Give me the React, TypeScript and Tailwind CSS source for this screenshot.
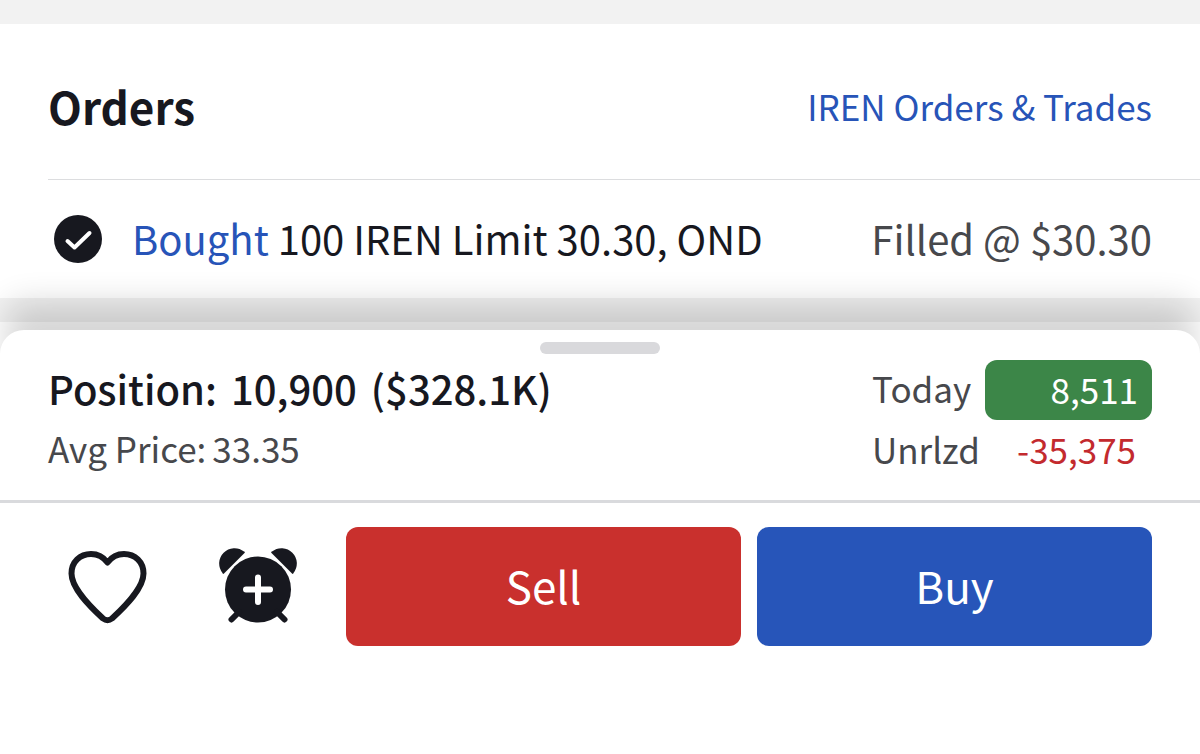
function CheckIcon() {
  return (
    <svg viewBox="0 0 48 48" className="size-12 shrink-0" aria-hidden="true">
      <circle cx="24" cy="24" r="24" fill="#17181f" />
      <path
        d="M13.500 26 L20.500 32.500 L35.500 18"
        fill="none"
        stroke="#fff"
        strokeWidth="4"
        strokeLinecap="round"
        strokeLinejoin="round"
      />
    </svg>
  )
}

function HeartIcon() {
  return (
    <svg viewBox="0 0 80 80" className="size-20" aria-hidden="true">
      <path
        d="M40.500 15.500 C36 9.500 30 7 24 7 C13 7 4.500 15 4.500 26.500 C4.500 41 22 58.500 36 71.500 Q40.500 75 45 71.500 C59 58.500 76.500 41 76.500 26.500 C76.500 15 68 7 57 7 C51 7 45 9.500 40.500 15.500 Z"
        fill="none"
        stroke="#17181f"
        strokeWidth="6"
        strokeLinejoin="round"
      />
    </svg>
  )
}

function AlarmIcon() {
  return (
    <svg viewBox="0 0 80 80" className="size-20" aria-hidden="true">
      <g fill="#17181f">
        <circle cx="40" cy="42.500" r="33" />
        <path d="M4.500 26 A15.300 15.300 0 0 1 26 4.500 Q27.500 5 26.500 6 L6 26.500 Q5 27.500 4.500 26 Z" />
        <path d="M75.500 26 A15.300 15.300 0 0 0 54 4.500 Q52.500 5 53.500 6 L74 26.500 Q75 27.500 75.500 26 Z" />
      </g>
      <path
        d="M21 65 L13.500 72.500 M59 65 L66.500 72.500"
        stroke="#17181f"
        strokeWidth="6"
        strokeLinecap="round"
      />
      <path
        d="M40 30.500 V55 M28 42.500 H52"
        stroke="#fff"
        strokeWidth="6"
        strokeLinecap="round"
      />
    </svg>
  )
}

function Orders() {
  return (
    <section className="bg-white pl-12">
      <header className="flex h-[156px] items-center justify-between border-b border-[#dcdddf] pt-2 pr-12">
        <h2 className="text-[44px] leading-none font-semibold">Orders</h2>
        <a href="#orders" className="text-[35px] leading-none text-[#2754b8]">
          IREN Orders &amp; Trades
        </a>
      </header>

      <div className="flex h-[118px] items-center justify-between pr-12 text-[40px] leading-none">
        <div className="flex items-center gap-[30px] pl-[6px]">
          <CheckIcon />
          <p className="pb-[2px]">
            <span className="text-[#2754b8]">Bought</span> 100 IREN Limit 30.30, OND
          </p>
        </div>
        <p className="pb-[2px] text-[#47484c]">Filled @ $30.30</p>
      </div>
    </section>
  )
}

function PositionSheet() {
  return (
    <section className="relative rounded-t-[24px] bg-white shadow-[0_-34px_32px_-6px_rgba(0,0,0,0.16)]">
      <div className="flex h-7 justify-center pt-3">
        <div className="h-3 w-[120px] rounded-full bg-[#d9d9dc]" />
      </div>

      <div className="flex justify-between border-b-3 border-[#d9dadd] px-12 pb-[22px] leading-[60px]">
        <div>
          <h3 className="flex gap-[14px] text-[40px] font-medium">
            <span>Position:</span>
            <span>10,900</span>
            <span>($328.1K)</span>
          </h3>
          <p className="flex gap-[6px] text-[35px] text-[#47484c]">
            <span>Avg Price:</span>
            <span>33.35</span>
          </p>
        </div>

        <dl className="w-[280px] text-[35px]">
          <div className="flex justify-between">
            <dt className="text-[#47484c]">Today</dt>
            <dd className="mt-[2px] h-[60px] w-[167px] rounded-[12px] bg-[#3c8648] pr-[14px] text-right leading-[58px] text-white">
              8,511
            </dd>
          </div>
          <div className="flex justify-between leading-[58px]">
            <dt className="text-[#47484c]">Unrlzd</dt>
            <dd className="pr-4 text-right text-[#c32a2e]">-35,375</dd>
          </div>
        </dl>
      </div>

      <div className="flex items-center px-12 pt-6 pb-[108px]">
        <button type="button" aria-label="Add to favorites" className="ml-[19px]">
          <HeartIcon />
        </button>
        <button type="button" aria-label="Add alert" className="mr-12 ml-[71px]">
          <AlarmIcon />
        </button>
        <div className="grid flex-1 grid-cols-2 gap-4 text-[44px] text-white">
          <button type="button" className="h-[119px] rounded-[12px] bg-[#c9302d] pb-1">
            Sell
          </button>
          <button type="button" className="h-[119px] rounded-[12px] bg-[#2755b9] pb-1">
            Buy
          </button>
        </div>
      </div>
    </section>
  )
}

export default function App() {
  return (
    <main className="min-h-screen overflow-hidden bg-white font-['Noto_Sans_CJK_SC',sans-serif] text-[#17181f]">
      <div className="h-6 bg-[#f2f2f2]" />
      <Orders />
      <div className="h-6 bg-[#f2f2f2]" />
      <div className="pt-2">
        <PositionSheet />
      </div>
    </main>
  )
}
